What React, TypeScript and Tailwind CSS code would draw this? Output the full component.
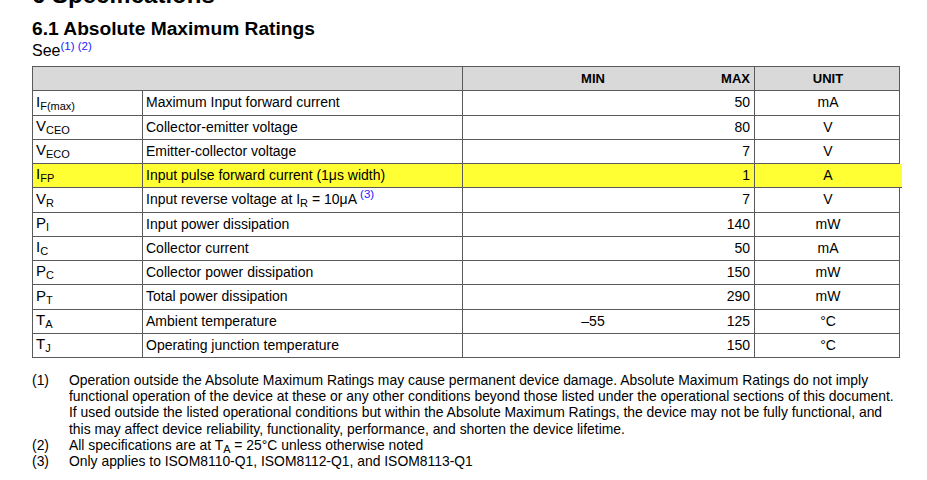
import type { ReactNode } from 'react';

type Row = {
  sym: string;
  sub: string;
  desc: ReactNode;
  min?: string;
  max: string;
  unit: string;
  hl?: boolean;
};

const Sub = ({ children }: { children: ReactNode }) => (
  <span className="text-[11px] relative top-[3px] leading-none">{children}</span>
);

const Note = ({ children }: { children: ReactNode }) => (
  <span className="text-[11.5px] text-[#1a1aff] relative -top-[6px] leading-none">{children}</span>
);

const rows: Row[] = [
  { sym: 'I', sub: 'F(max)', desc: 'Maximum Input forward current', max: '50', unit: 'mA' },
  { sym: 'V', sub: 'CEO', desc: 'Collector-emitter voltage', max: '80', unit: 'V' },
  { sym: 'V', sub: 'ECO', desc: 'Emitter-collector voltage', max: '7', unit: 'V' },
  { sym: 'I', sub: 'FP', desc: 'Input pulse forward current (1μs width)', max: '1', unit: 'A', hl: true },
  {
    sym: 'V',
    sub: 'R',
    desc: (
      <>
        Input reverse voltage at I<Sub>R</Sub> = 10μA <Note>(3)</Note>
      </>
    ),
    max: '7',
    unit: 'V',
  },
  { sym: 'P', sub: 'I', desc: 'Input power dissipation', max: '140', unit: 'mW' },
  { sym: 'I', sub: 'C', desc: 'Collector current', max: '50', unit: 'mA' },
  { sym: 'P', sub: 'C', desc: 'Collector power dissipation', max: '150', unit: 'mW' },
  { sym: 'P', sub: 'T', desc: 'Total power dissipation', max: '290', unit: 'mW' },
  { sym: 'T', sub: 'A', desc: 'Ambient temperature', min: '–55', max: '125', unit: '°C' },
  { sym: 'T', sub: 'J', desc: 'Operating junction temperature', max: '150', unit: '°C' },
];

const grid = 'grid grid-cols-[110px_320px_260px_32px_146px] h-[24.25px] border-b border-[#5a5a5a]';

export default function App() {
  return (
    <div
      className="bg-white h-[480px] w-[927px] overflow-hidden pl-[32px] text-black"
      style={{ fontFamily: '"Liberation Sans", Arial, sans-serif' }}
    >
      <div className="text-[24px] font-bold leading-[24px] -mt-[17px]">6 Specifications</div>
      <h2 className="text-[19.2px] font-bold leading-[22px] mt-[11px]">6.1 Absolute Maximum Ratings</h2>
      <p className="text-[16px] leading-[18px] mt-[2px]">
        See<Note>(1) (2)</Note>
      </p>

      <div className="w-[868px] mt-[6px] border-t border-l border-r border-[#5a5a5a] text-[14px]">
        <div className={`${grid} bg-[#d9d9d9] font-bold text-[13px]`}>
          <div className="col-span-2 border-r border-[#5a5a5a]" />
          <div className="flex items-center justify-center">MIN</div>
          <div className="flex items-center justify-end pr-[4px] border-r border-[#5a5a5a] whitespace-nowrap">
            MAX
          </div>
          <div className="flex items-center justify-center">UNIT</div>
        </div>
        {rows.map((r, i) => (
          <div key={i} className={`${grid} ${r.hl ? 'bg-[#ffff33] -mr-[3px] pr-[3px]' : ''}`}>
            <div className="flex items-center pl-[3px] border-r border-[#5a5a5a] text-[15px]">
              <span className="-mt-[2px]">
                {r.sym}
                <Sub>{r.sub}</Sub>
              </span>
            </div>
            <div className="flex items-center pl-[3px] border-r border-[#5a5a5a] whitespace-nowrap">
              <span>{r.desc}</span>
            </div>
            <div className="flex items-center justify-center">{r.min}</div>
            <div className="flex items-center justify-end pr-[4px] border-r border-[#5a5a5a] whitespace-nowrap">
              {r.max}
            </div>
            <div className="flex items-center justify-center">{r.unit}</div>
          </div>
        ))}
      </div>

      <div className="mt-[14px] text-[13.9px] leading-[16.2px]">
        <div className="flex">
          <div className="w-[37px] shrink-0">(1)</div>
          <div>
            <div>
              Operation outside the Absolute Maximum Ratings may cause permanent device damage. Absolute Maximum Ratings do not imply
            </div>
            <div>
              functional operation of the device at these or any other conditions beyond those listed under the operational sections of this document.
            </div>
            <div>
              If used outside the listed operational conditions but within the Absolute Maximum Ratings, the device may not be fully functional, and
            </div>
            <div>this may affect device reliability, functionality, performance, and shorten the device lifetime.</div>
          </div>
        </div>
        <div className="flex">
          <div className="w-[37px] shrink-0">(2)</div>
          <div>
            All specifications are at T<Sub>A</Sub> = 25°C unless otherwise noted
          </div>
        </div>
        <div className="flex">
          <div className="w-[37px] shrink-0">(3)</div>
          <div>Only applies to ISOM8110-Q1, ISOM8112-Q1, and ISOM8113-Q1</div>
        </div>
      </div>
    </div>
  );
}
